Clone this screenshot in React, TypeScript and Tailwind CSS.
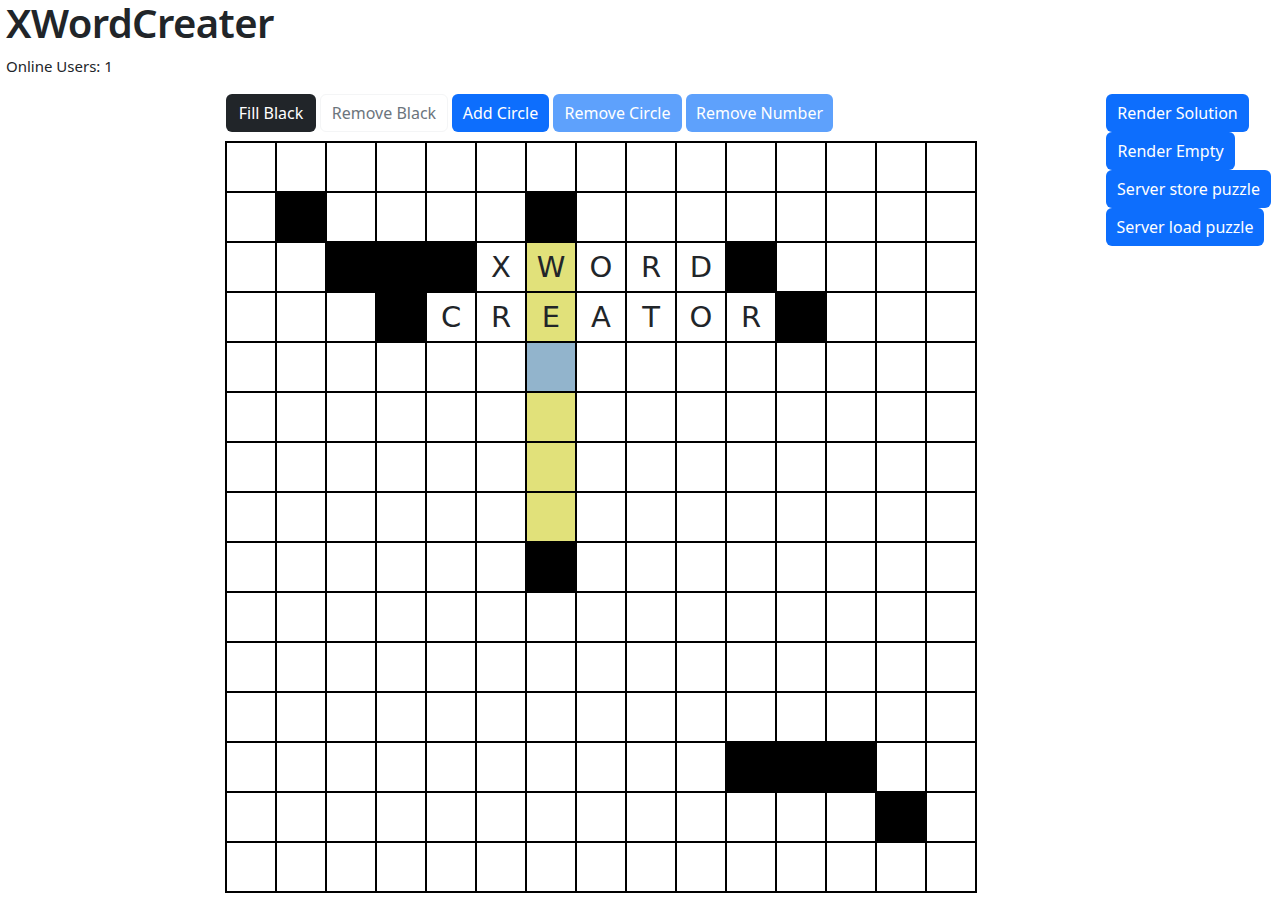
import { Fragment } from 'react'

const BLACK = new Set([
    '1-1', '1-6',
    '2-2', '2-3', '2-4', '2-10',
    '3-3', '3-11',
    '8-6',
    '12-10', '12-11', '12-12',
    '13-13',
])

const LETTERS: Record<string, string> = {
    '2-5': 'X', '2-6': 'W', '2-7': 'O', '2-8': 'R', '2-9': 'D',
    '3-4': 'C', '3-5': 'R', '3-6': 'E', '3-7': 'A', '3-8': 'T', '3-9': 'O', '3-10': 'R',
}

const HIGHLIGHT = new Set(['2-6', '3-6', '5-6', '6-6', '7-6'])
const SELECTED = '4-6'

function Cell({ r, c }: { r: number, c: number }) {
    const key = `${r}-${c}`
    let bg = 'bg-white'
    if (BLACK.has(key)) bg = 'bg-black'
    else if (key === SELECTED) bg = 'bg-[#92b4cc]'
    else if (HIGHLIGHT.has(key)) bg = 'bg-[#e1e17a]'

    return (
        <div className={`${bg} h-[48px] w-[48px] flex items-center justify-center text-[29px] leading-none text-[#212529]`} style={{ fontFamily: '"DejaVu Sans", sans-serif' }}>
            {LETTERS[key] ?? ''}
        </div>
    )
}

export default function App() {
    const btn = 'h-[38px] rounded-[6px] px-3 text-[16px] flex items-center justify-center whitespace-nowrap'

    return (
        <div className="min-h-[916px] bg-white text-[#212529] font-['Noto_Sans',sans-serif]">
            <div className="px-[6px]">
                <h1 className="text-[40px] leading-[46px] font-semibold mb-[8px] tracking-[-0.6px]">XWordCreater</h1>
                <p className="text-[15px] leading-6 mb-[16px]">Online Users: 1</p>
            </div>

            <div className="flex pl-[225px]">
                <div className="w-[881px]">
                    <div className="flex gap-1 ml-px mb-[9px]">
                        <button className={`${btn} w-[90px] bg-[#212529] text-white`}>Fill Black</button>
                        <button className={`${btn} w-[128px] bg-white text-[#6c757d] border border-[#f4f5f6]`}>Remove Black</button>
                        <button className={`${btn} w-[97px] bg-[#0d6efd] text-white`}>Add Circle</button>
                        <button className={`${btn} w-[129px] bg-[#5ea1fc] text-white`}>Remove Circle</button>
                        <button className={`${btn} w-[147px] bg-[#5ea1fc] text-white`}>Remove Number</button>
                    </div>

                    <div className="grid grid-cols-[repeat(15,48px)] gap-[2px] p-[2px] bg-black w-fit">
                        {Array.from({ length: 15 }, (_, r) => (
                            <Fragment key={r}>
                                {Array.from({ length: 15 }, (_, c) => <Cell key={c} r={r} c={c} />)}
                            </Fragment>
                        ))}
                    </div>
                </div>

                <div className="flex flex-col items-start">
                    <button className={`${btn} w-[143px] bg-[#0d6efd] text-white`}>Render Solution</button>
                    <button className={`${btn} w-[129px] bg-[#0d6efd] text-white`}>Render Empty</button>
                    <button className={`${btn} w-[165px] bg-[#0d6efd] text-white`}>Server store puzzle</button>
                    <button className={`${btn} w-[158px] bg-[#0d6efd] text-white`}>Server load puzzle</button>
                </div>
            </div>
        </div>
    )
}
